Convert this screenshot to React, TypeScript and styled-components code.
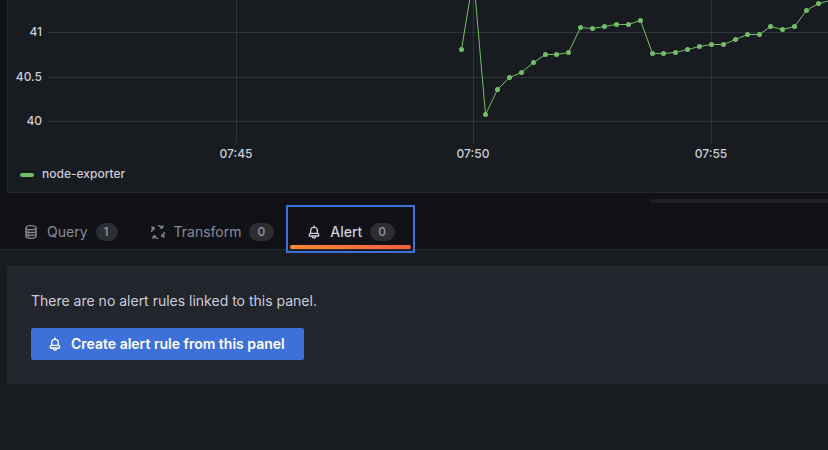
import React from "react";
import styled, { createGlobalStyle, css } from "styled-components";

const color = {
  canvas: "#111217",
  primary: "#181b1f",
  secondary: "#22252b",
  border: "#25282d",
  text: "#ccccdc",
  muted: "#8a8a96",
  blue: "#3d71d9",
  green: "#73bf69",
};

const GlobalStyle = createGlobalStyle`
  * { box-sizing: border-box; }
  html { background: ${color.primary}; }
  body {
    margin: 0;
    color: ${color.text};
    font: 400 14px/22px Inter, "Liberation Sans", sans-serif;
    overflow: hidden;
  }
`;

const Upper = styled.div`
  display: flex;
  flex-direction: column;
  background: ${color.canvas};
`;

const Panel = styled.section`
  display: flex;
  flex-direction: column;
  margin-left: 7px;
  padding-bottom: 8px;
  background: ${color.primary};
  border: 1px solid ${color.border};
  border-width: 0 0 1px 1px;
  border-radius: 0 0 0 2px;
`;

const Plot = styled.svg`
  display: block;
  width: 100%;
  height: 164px;
  overflow: hidden;
`;

const GridLine = styled.line`
  stroke: rgba(240, 250, 255, 0.11);
  stroke-width: 1;
  shape-rendering: crispEdges;
`;

const AxisLabel = styled.text`
  fill: ${color.text};
  font-size: 12px;
  font-weight: 500;
`;

const Series = styled.polyline`
  fill: none;
  stroke: ${color.green};
  stroke-width: 1;
`;

const Legend = styled.div`
  display: flex;
  align-items: center;
  gap: 8px;
  padding-left: 12px;
  font-size: 12px;
  font-weight: 500;
  line-height: 20px;
`;

const Swatch = styled.span`
  width: 14px;
  height: 4px;
  margin-top: 2px;
  border-radius: 2px;
  background: ${color.green};
`;

const Splitter = styled.div`
  align-self: flex-end;
  width: 178px;
  height: 4px;
  margin-top: 6px;
  border-radius: 4px 0 0 4px;
  background: #1e1f24;
`;

const TabBar = styled.div`
  display: flex;
  margin-top: 6px;
  padding-left: 7px;
  border-bottom: 1px solid ${color.border};
`;

const Tab = styled.button<{ $active?: boolean }>`
  position: relative;
  display: flex;
  align-items: center;
  gap: 8px;
  height: 40px;
  padding: 5px 16px 0;
  border: 0;
  background: transparent;
  color: ${(p) => (p.$active ? color.text : color.muted)};
  font: inherit;
  font-weight: ${(p) => (p.$active ? 500 : 400)};
  cursor: pointer;

  ${(p) =>
    p.$active &&
    css`
      outline: 2px solid ${color.blue};
      outline-offset: 2px;
      z-index: 1;

      &::after {
        content: "";
        position: absolute;
        inset: auto 0 0;
        height: 4px;
        border-radius: 2px;
        background: linear-gradient(90deg, #ff8833, #f55f3e);
      }
    `}
`;

const Counter = styled.span`
  padding: 0 9px 0 8px;
  border-radius: 9px;
  background: #2d2e33;
  color: #9494a1;
  font-size: 12px;
  font-weight: 500;
  line-height: 18px;
`;

const Icon = styled.svg`
  flex: none;
  width: 16px;
  height: 16px;
  fill: currentColor;
`;

const AlertBox = styled.section`
  display: flex;
  flex-direction: column;
  align-items: flex-start;
  gap: 16px;
  margin: 16px 0 0 7px;
  padding: 24px;
  background: ${color.secondary};
`;

const Message = styled.p`
  margin: 0;
`;

const CreateButton = styled.button`
  display: flex;
  align-items: center;
  gap: 8px;
  min-width: 273px;
  height: 32px;
  padding: 0 16px;
  border: 0;
  border-radius: 2px;
  background: ${color.blue};
  color: #fff;
  font: inherit;
  font-weight: 600;
  cursor: pointer;
`;

const BellIcon = () => (
  <Icon viewBox="0 0 24 24" aria-hidden="true">
    <path d="M18,13.18V10a6,6,0,0,0-5-5.91V3a1,1,0,0,0-2,0V4.09A6,6,0,0,0,6,10v3.18A3,3,0,0,0,4,16v2a1,1,0,0,0,1,1H8.14a4,4,0,0,0,7.72,0H19a1,1,0,0,0,1-1V16A3,3,0,0,0,18,13.18ZM8,10a4,4,0,0,1,8,0v3H8Zm4,10a2,2,0,0,1-1.72-1h3.44A2,2,0,0,1,12,20Zm6-3H6V16a1,1,0,0,1,1-1H17a1,1,0,0,1,1,1Z" />
  </Icon>
);

const DatabaseIcon = () => (
  <Icon viewBox="0 0 24 24" aria-hidden="true">
    <g fill="none" stroke="currentColor" strokeWidth="2">
      <ellipse cx="12" cy="5.5" rx="7.5" ry="3" />
      <path d="M4.500 5.500V18.500C4.500 20.200 7.800 21.500 12 21.500S19.500 20.200 19.500 18.500V5.500" />
      <path d="M4.500 10C4.500 11.600 7.800 12.800 12 12.800S19.500 11.600 19.500 10M4.500 14.300C4.500 15.900 7.800 17.100 12 17.100S19.500 15.900 19.500 14.300" />
    </g>
    <circle cx="8" cy="10.500" r="1" />
    <circle cx="8" cy="14.800" r="1" />
    <circle cx="8" cy="18.600" r="1" />
  </Icon>
);

const TransformIcon = () => (
  <Icon viewBox="0 0 24 24" aria-hidden="true">
    <g
      fill="none"
      stroke="currentColor"
      strokeWidth="2"
      strokeLinecap="round"
      strokeLinejoin="round"
    >
      {[0, 90, 180, 270].map((angle) => (
        <path
          key={angle}
          transform={`rotate(${angle} 12 12)`}
          d="M2.500 11.500C2.700 9 3.800 6.700 5.800 5M2.500 4.700L5.800 5L6 8.300"
        />
      ))}
    </g>
  </Icon>
);

const points: [number, number][] = [
  [461, 49], [473, -24], [485, 114], [497, 89], [509, 77], [521, 72],
  [533, 62], [545, 54], [556, 54], [568, 52], [580, 27], [592, 28],
  [604, 26], [616, 24], [628, 24], [640, 20], [652, 53], [663, 53],
  [675, 52], [687, 49], [699, 46], [711, 44], [723, 44], [735, 39],
  [747, 34], [759, 34], [770, 26], [782, 29], [794, 26], [806, 10],
  [818, 3], [830, 0],
];

const PLOT_LEFT = 8;
const toPlot = ([x, y]: [number, number]) => [x - PLOT_LEFT + 0.5, y + 0.5];

const yTicks = [
  { y: 32, label: "41" },
  { y: 77, label: "40.5" },
  { y: 121, label: "40" },
];
const xTicks = [
  { x: 228, label: "07:45" },
  { x: 465, label: "07:50" },
  { x: 703, label: "07:55" },
];

const Chart = () => (
  <Plot role="img" aria-label="node-exporter time series">
    {yTicks.map((t) => (
      <g key={t.label}>
        <GridLine x1="40" x2="100%" y1={t.y + 0.5} y2={t.y + 0.5} />
        <AxisLabel x="34" y={t.y + 4} textAnchor="end">{t.label}</AxisLabel>
      </g>
    ))}
    {xTicks.map((t) => (
      <g key={t.label}>
        <GridLine x1={t.x + 0.5} x2={t.x + 0.5} y1="0" y2="143" />
        <AxisLabel x={t.x} y="158" textAnchor="middle">{t.label}</AxisLabel>
      </g>
    ))}
    <Series points={points.map((p) => toPlot(p).join(",")).join(" ")} />
    {points.map((p) => {
      const [cx, cy] = toPlot(p);
      return <circle key={cx} cx={cx} cy={cy} r="2.500" fill={color.green} />;
    })}
  </Plot>
);

const tabs = [
  { label: "Query", count: 1, icon: <DatabaseIcon /> },
  { label: "Transform", count: 0, icon: <TransformIcon /> },
  { label: "Alert", count: 0, icon: <BellIcon />, active: true },
];

export default function App() {
  return (
    <>
      <GlobalStyle />
      <Upper>
        <Panel>
          <Chart />
          <Legend>
            <Swatch />
            node-exporter
          </Legend>
        </Panel>
        <Splitter />
        <TabBar role="tablist">
          {tabs.map((t) => (
            <Tab key={t.label} role="tab" aria-selected={!!t.active} $active={t.active}>
              {t.icon}
              {t.label}
              <Counter>{t.count}</Counter>
            </Tab>
          ))}
        </TabBar>
      </Upper>
      <AlertBox>
        <Message>There are no alert rules linked to this panel.</Message>
        <CreateButton type="button">
          <BellIcon />
          Create alert rule from this panel
        </CreateButton>
      </AlertBox>
    </>
  );
}
